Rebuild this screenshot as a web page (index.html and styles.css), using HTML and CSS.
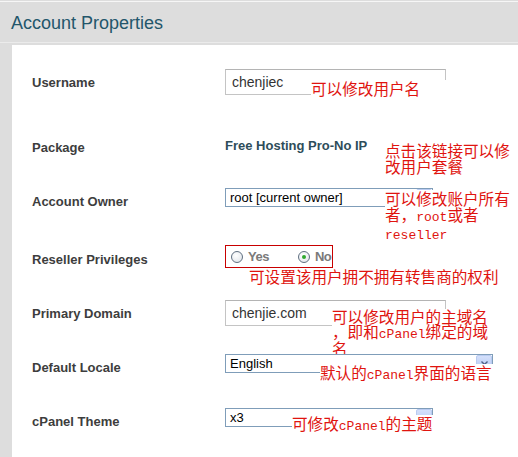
FILE: index.html
```html
<!DOCTYPE html>
<html lang="zh-CN">
<head>
<meta charset="utf-8">
<title>Account Properties</title>
<link rel="stylesheet" href="styles.css">
</head>
<body>
<header class="page-header">
  <h1 class="page-title">Account Properties</h1>
</header>

<main class="panel">
  <div class="row row--gap-lg">
    <div class="label">Username</div>
    <div class="field"><input class="text-input" type="text" value="chenjiec" readonly></div>
    <div class="note note--username">可以修改用户名</div>
  </div>

  <div class="row">
    <div class="label">Package</div>
    <div class="field"><a class="package-link">Free Hosting Pro-No IP</a></div>
    <div class="note note--package">点击该链接可以修<br>改用户套餐</div>
  </div>

  <div class="row row--gap-sm">
    <div class="label">Account Owner</div>
    <div class="field">
      <div class="select">
        <span class="select-value">root [current owner]</span>
        <span class="select-button"><svg width="7" height="5" viewBox="0 0 7 5"><path d="M0.5 0.5 L3.5 3.5 L6.5 0.5" fill="none" stroke="#4d6185" stroke-width="1.4"/></svg></span>
      </div>
    </div>
    <div class="note note--owner">可以修改账户所有<br>者，<span class="latin">root</span>或者<br><span class="latin">reseller</span></div>
  </div>

  <div class="row">
    <div class="label">Reseller Privileges</div>
    <div class="field">
      <div class="radio-group">
        <span class="radio-option radio-option--first"><span class="radio"></span>Yes</span>
        <span class="radio-option"><span class="radio radio--checked"></span>No</span>
      </div>
    </div>
    <div class="note note--reseller">可设置该用户拥不拥有转售商的权利</div>
  </div>

  <div class="row">
    <div class="label">Primary Domain</div>
    <div class="field"><input class="text-input" type="text" value="chenjie.com" readonly></div>
    <div class="note note--domain">可以修改用户的主域名<br>，即和<span class="latin">cPanel</span>绑定的域<br>名</div>
  </div>

  <div class="row">
    <div class="label">Default Locale</div>
    <div class="field">
      <div class="select select--wide">
        <span class="select-value">English</span>
        <span class="select-button"><svg width="7" height="5" viewBox="0 0 7 5"><path d="M0.5 0.5 L3.5 3.5 L6.5 0.5" fill="none" stroke="#4d6185" stroke-width="1.4"/></svg></span>
      </div>
    </div>
    <div class="note note--locale">默认的<span class="latin">cPanel</span>界面的语言</div>
  </div>

  <div class="row">
    <div class="label">cPanel Theme</div>
    <div class="field">
      <div class="select">
        <span class="select-value">x3</span>
        <span class="select-button"><svg width="7" height="5" viewBox="0 0 7 5"><path d="M0.5 0.5 L3.5 3.5 L6.5 0.5" fill="none" stroke="#4d6185" stroke-width="1.4"/></svg></span>
      </div>
    </div>
    <div class="note note--theme">可修改<span class="latin">cPanel</span>的主题</div>
  </div>
</main>
</body>
</html>
```

FILE: styles.css
```css
* {
  box-sizing: border-box;
}

html,
body {
  margin: 0;
}

body {
  width: 518px;
  height: 457px;
  overflow: hidden;
  background: #dddddd;
  font-family: "Liberation Sans", Arial, sans-serif;
}

/* Title bar */
.page-header {
  margin-top: 1px;
  height: 42px;
  padding: 11px 0 0 11px;
  border-top: 1px solid #f6f6f6;
  border-bottom: 1px solid #ebebeb;
}

.page-title {
  margin: 0;
  font-size: 18px;
  font-weight: normal;
  line-height: normal;
  color: #23566b;
}

/* White form panel */
.panel {
  display: flex;
  flex-direction: column;
  height: 412px;
  margin: 2px 0 0 12px;
  padding-top: 10px;
  background: #ffffff;
}

.row {
  position: relative;
  display: flex;
  align-items: center;
  height: 54px;
  flex-shrink: 0;
}

.row--gap-lg {
  margin-bottom: 11px;
}

.row--gap-sm {
  margin-bottom: 4px;
}

.label {
  flex: 0 0 213px;
  padding-left: 20px;
  font-size: 13px;
  font-weight: bold;
  color: #3d3d3d;
}

.field {
  display: flex;
  align-items: center;
}

/* Text inputs */
.text-input {
  width: 221px;
  height: 26px;
  margin: 0;
  padding: 0 6px;
  border: 1px solid #c4c4c4;
  border-top-color: #b4b4b4;
  background: #ffffff;
  font-family: "Liberation Sans", Arial, sans-serif;
  font-size: 14px;
  color: #333333;
  outline: none;
}

.package-link {
  margin-bottom: 3px;
  font-size: 13px;
  font-weight: bold;
  color: #2e4d5a;
  cursor: pointer;
}

/* Drop-down boxes */
.select {
  display: flex;
  align-items: center;
  justify-content: space-between;
  width: 208px;
  height: 19px;
  margin-bottom: 7px;
  padding-left: 4px;
  border: 1px solid #7f9db9;
  background: #ffffff;
  font-size: 13px;
  color: #000000;
}

.select--wide {
  width: 268px;
}

.select-button {
  display: flex;
  align-items: center;
  justify-content: center;
  width: 16px;
  height: 17px;
  border: 1px solid #b9cbf1;
  border-radius: 2px;
  background: linear-gradient(#d4e0fb, #b2c6f2);
}

/* Yes / No radio pair */
.radio-group {
  display: flex;
  align-items: center;
  width: 108px;
  height: 23px;
  margin-bottom: 5px;
  padding-left: 5px;
  border: 1px solid #c80000;
}

.radio-option {
  display: flex;
  align-items: center;
  font-size: 13px;
  font-weight: bold;
  letter-spacing: -0.5px;
  color: #7a7a7a;
}

.radio-option--first {
  margin-right: 29px;
}

.radio {
  position: relative;
  width: 12px;
  height: 12px;
  margin-right: 5px;
  border: 1px solid #5f6f80;
  border-radius: 50%;
  background: radial-gradient(circle at 40% 35%, #ffffff, #dde2e8);
}

.radio--checked::after {
  content: "";
  position: absolute;
  left: 3px;
  top: 3px;
  width: 4px;
  height: 4px;
  border-radius: 50%;
  background: #2fa82f;
}

/* Red hand-written style notes laid over the form */
.note {
  position: absolute;
  padding-right: 2px;
  background: #ffffff;
  color: #e0140f;
  font-family: "Noto Sans CJK SC", sans-serif;
  font-size: 15.6px;
  line-height: 16px;
  white-space: nowrap;
}

.latin {
  font-family: "Liberation Mono", "Courier New", monospace;
  font-size: 13px;
  line-height: 1;
}

.note--username {
  left: 299px;
  top: 25px;
  min-width: 140px;
}

.note--package {
  left: 373px;
  top: 22px;
}

.note--owner {
  left: 373px;
  top: 16px;
}

.note--reseller {
  left: 237px;
  top: 36px;
}

.note--domain {
  left: 320px;
  top: 23px;
  line-height: 15px;
}

.note--locale {
  left: 308px;
  top: 24px;
}

.note--theme {
  left: 280px;
  top: 21px;
}
```
